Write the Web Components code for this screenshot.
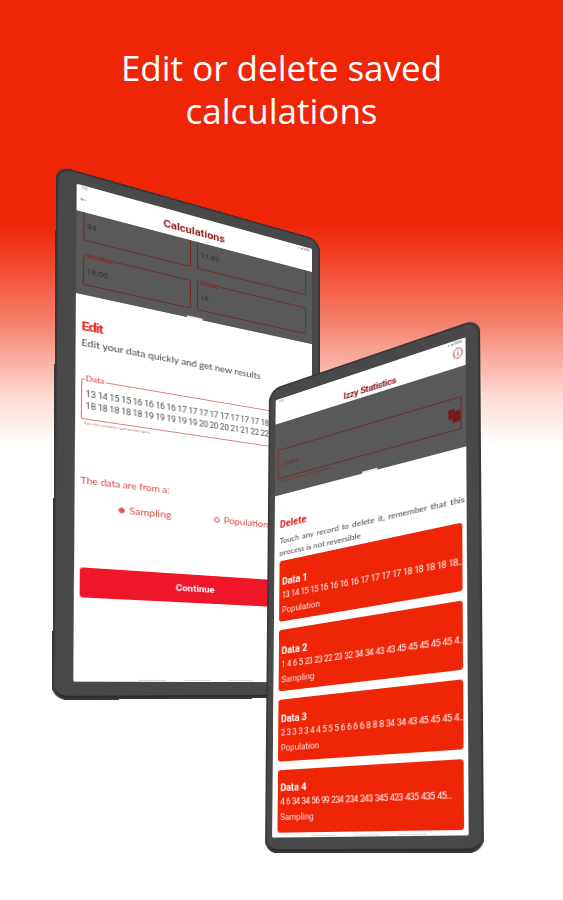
<!DOCTYPE html>
<html><head><meta charset="utf-8">
<style>
html,body{margin:0;padding:0}
body{width:563px;height:900px;overflow:hidden;font-family:"Open Sans","Liberation Sans",sans-serif}
</style></head>
<body>
<promo-shot>
  <span slot="title">Edit or delete saved<br>calculations</span>
  <tablet-frame w="264" h="531" pad="13 9 18 18" corners="56,165 320,240 320,698 52,700" slot="devices">
    <app-screen title="Calculations" time="9:25" back shift="-8" oh="84">
      <div slot="overlay" class="fields">
        <outline-field value="34" open></outline-field>
        <outline-field value="17.82" open></outline-field>
        <outline-field label="Median" value="18.00"></outline-field>
        <outline-field label="Mode" value="18"></outline-field>
      </div>
      <edit-sheet slot="sheet"></edit-sheet>
    </app-screen>
  </tablet-frame>
  <tablet-frame w="216" h="500" pad="14 13 16 8" corners="269,390 480,318 484,853 265,853" slot="devices">
    <app-screen title="Izzy Statistics" time="9:25" info shift="5" oh="79">
      <stats-overlay slot="overlay"></stats-overlay>
      <delete-sheet slot="sheet"></delete-sheet>
    </app-screen>
  </tablet-frame>
</promo-shot>
<script>
const shadow=(el,html)=>{el.attachShadow({mode:'open'}).innerHTML=html;};
const FONT='font-family:Lato,"Liberation Sans",sans-serif;';

function homography(w,h,p){
  const A=[],b=[];
  const src=[[0,0],[w,0],[w,h],[0,h]];
  for(let i=0;i<4;i++){
    const [x,y]=src[i],[u,v]=p[i];
    A.push([x,y,1,0,0,0,-u*x,-u*y]);b.push(u);
    A.push([0,0,0,x,y,1,-v*x,-v*y]);b.push(v);
  }
  for(let i=0;i<8;i++){
    let m=i;for(let r=i+1;r<8;r++)if(Math.abs(A[r][i])>Math.abs(A[m][i]))m=r;
    [A[i],A[m]]=[A[m],A[i]];[b[i],b[m]]=[b[m],b[i]];
    for(let r=0;r<8;r++){if(r===i)continue;const f=A[r][i]/A[i][i];
      for(let c=i;c<8;c++)A[r][c]-=f*A[i][c];b[r]-=f*b[i];}
  }
  const s=b.map((v,i)=>v/A[i][i]);
  return `matrix3d(${s[0]},${s[3]},0,${s[6]},${s[1]},${s[4]},0,${s[7]},0,0,1,0,${s[2]},${s[5]},0,1)`;
}

customElements.define('promo-shot',class extends HTMLElement{constructor(){super();shadow(this,`<style>
:host{display:block;position:relative;width:563px;height:900px;overflow:hidden;
background:linear-gradient(#ee2507 0,#ee2507 225px,#f13f25 255px,#f6836f 325px,#fdd9d2 395px,#fff 445px)}
h1{margin:0;padding-top:46px;text-align:center;color:#fff;font:400 35px/43px "Open Sans",sans-serif}
</style><h1><slot name="title"></slot></h1><slot name="devices"></slot>`);}});

customElements.define('tablet-frame',class extends HTMLElement{constructor(){super();
  const w=+this.getAttribute('w'),h=+this.getAttribute('h');
  const pts=this.getAttribute('corners').split(' ').map(s=>s.split(',').map(Number));
  const pad=this.getAttribute('pad').split(' ').join('px ')+'px';
  shadow(this,`<style>
:host{display:block;position:absolute;left:0;top:0;width:${w}px;height:${h}px;box-sizing:border-box;
transform-origin:0 0;transform:${homography(w,h,pts)};padding:${pad};background:#494949;border-radius:14px;
box-shadow:inset 0 0 0 2px #383838,inset 0 -4px 0 #2c2c2c}
.s{width:100%;height:100%;overflow:hidden;background:#fff;border-radius:2px;filter:blur(.35px)}
</style><div class="s"><slot></slot></div>`);}});

customElements.define('app-screen',class extends HTMLElement{constructor(){super();
  const t=this.getAttribute('title'),tm=this.getAttribute('time');
  const s=+this.getAttribute('shift'),oh=+this.getAttribute('oh');
  const info=this.hasAttribute('info');
  shadow(this,`<style>
:host{display:flex;flex-direction:column;height:100%;${FONT}position:relative}
header{flex:none;height:27px;background:#fff;position:relative;display:flex;align-items:flex-end;justify-content:center;box-sizing:border-box;padding-bottom:${info?2:4}px}
h2{margin:0 0 0 ${2*s}px;font-size:${info?9.5:11}px;letter-spacing:${info?-.4:0}px;font-weight:700;color:#8e1c1c;font-family:Roboto,sans-serif}
.st{position:absolute;left:4px;top:1px;font-size:3px;color:#777}
.sr{position:absolute;right:3px;top:1px;font-size:3px;color:#555}
.b{position:absolute;left:3px;bottom:10px;color:#b33;font-size:6px;line-height:7px}
svg{position:absolute;right:2px;bottom:8px}
.o{flex:none;background:#595959;height:${oh}px;overflow:hidden;box-sizing:border-box}
.m{flex:1;background:#fff;position:relative;min-height:0}
.h{position:absolute;left:50%;top:-2px;margin-left:${s-8}px;width:16px;height:2px;border-radius:2px;background:#e8e8e8}
.nav{position:absolute;left:0;right:0;bottom:1px;display:flex;justify-content:center;gap:18px;margin-left:${s}px}
.nav i{display:block;width:26px;height:1.4px;background:#d9d9d9}
</style>
<header><span class="st">${tm}</span><span class="sr">▾ ▮ 100%</span>
${this.hasAttribute('back')?'<span class="b">←</span>':''}
${info?'<svg width="10" height="12" viewBox="0 0 10 12"><ellipse cx="5" cy="6" rx="3.9" ry="5" fill="none" stroke="#9c2a2a" stroke-width=".8"/><path d="M5 3v1M5 5.2v3.6" stroke="#9c2a2a" stroke-width=".8"/></svg>':''}
<h2>${t}</h2></header>
<div class="o"><slot name="overlay"></slot></div>
<div class="m"><div class="h"></div><slot name="sheet"></slot><div class="nav"><i></i><i></i><i></i></div></div>`);}
  connectedCallback(){const f=this.querySelector('.fields');if(f){f.style.cssText='display:grid;grid-template-columns:101px 117px;grid-auto-rows:31px;gap:14px 6px;padding:0 6px;margin-top:-2px';}}
});

customElements.define('outline-field',class extends HTMLElement{constructor(){super();
  const l=this.getAttribute('label'),v=this.getAttribute('value');
  shadow(this,`<style>
:host{display:block;position:relative;box-sizing:border-box;border:.8px solid #702a2a;border-radius:1px;padding:11px 2px 0;font:7.8px Roboto,sans-serif;color:#2f2f2f}
:host([open]){border-top:none}
i{position:absolute;left:1px;top:-5px;background:#595959;padding:0 1px;font-style:normal;font-weight:500;color:#8b2424;font-size:7.6px}
</style>${l?`<i>${l}</i>`:''}${v}`);}});

customElements.define('edit-sheet',class extends HTMLElement{constructor(){super();
  shadow(this,`<style>
:host{display:flex;flex-direction:column;padding:24px 7px 0 5px;${FONT}color:#d8362a}
h3{margin:0;font:700 13px/16px Roboto,sans-serif;letter-spacing:-.9px;color:#e2261c}
p{margin:2px 0 0;font-size:9.6px;line-height:13px;color:#444;white-space:nowrap}
.d{height:41px;border:.8px solid #d88078;border-radius:1px;box-sizing:border-box;padding:9px 3px 0;font:8.4px/11.5px Roboto,sans-serif;letter-spacing:-.28px;color:#4a4a4a;white-space:nowrap;width:223px;overflow:hidden}
.l{position:absolute;left:3px;top:-5px;background:#fff;padding:0 1px;color:#d8362a;font-size:8px;line-height:9px;z-index:1}
.w{position:relative;flex:none;margin-top:30px}
small{display:block;font-size:3.6px;line-height:5px;color:#b77;margin-top:1px;padding-left:3px}
.q{margin-top:49px;font-size:9.3px;line-height:13px;color:#d8453a}
.r{display:flex;margin:13px 0 0 34px;gap:42px;font-size:10px;line-height:13px}
.go{margin-top:55px;height:30px;border-radius:3px;background:#f01629;color:#fff;font:700 9.5px/30px Roboto,sans-serif;text-align:center;flex:none;padding-right:10px}
</style>
<h3>Edit</h3><p>Edit your data quickly and get new results</p>
<div class="w"><span class="l">Data</span><div class="d">13 14 15 15 16 16 16 16 17 17 17 17 17 17 17 17 18<br>18 18 18 18 18 19 19 19 19 19 20 20 20 21 21 22 22</div></div>
<small>Enter the numbers separated by space</small>
<div class="q">The data are from a:</div>
<div class="r"><radio-option checked>Sampling</radio-option><radio-option>Population</radio-option></div>
<div class="go">Continue</div>`);}});

customElements.define('radio-option',class extends HTMLElement{constructor(){super();
  const c=this.hasAttribute('checked');
  shadow(this,`<style>:host{display:inline-flex;align-items:center;gap:4px;color:#d8453a}
b{width:6px;height:6px;border:.8px solid #d8453a;border-radius:50%;box-sizing:border-box;display:block;background:${c?'radial-gradient(#d8453a 55%,transparent 60%)':'none'}}
</style><b></b><slot></slot>`);}});

customElements.define('stats-overlay',class extends HTMLElement{constructor(){super();
  shadow(this,`<style>
:host{display:block;padding:29px 4px 0 3px;font-family:Roboto,sans-serif}
.a{position:relative;height:32px;border:.8px solid #702a2a;box-sizing:border-box;display:flex;justify-content:space-between;align-items:center;padding:0 0 0 6px;color:#7e2a2a;font-size:8px}
.c{font-size:3.4px;line-height:5px;margin-top:1px;color:#8a2a2a;padding-left:2px}
</style>
<div class="a"><span>Data</span><svg width="11" height="15" viewBox="0 0 11 15"><path d="M0 1.5h5.5v9.5H0z" fill="#7a1717"/><path d="M3.5 4h6l1.5 1.5V14.5H3.5z" fill="#7a1717" stroke="#4e4a4a" stroke-width=".6"/></svg></div>
<div class="c">Enter the numbers separated by space</div>`);}});

customElements.define('delete-sheet',class extends HTMLElement{constructor(){super();
  shadow(this,`<style>
:host{display:flex;flex-direction:column;padding:27px 4px 0 6px;${FONT}}
h3{margin:0;font:700 10.5px/12px Roboto,sans-serif;color:#dc2020}
p{margin:4.5px 0 2.5px;font-size:8.4px;line-height:13px;color:#444;white-space:nowrap}
p span{word-spacing:1.1px}
.l{display:flex;flex-direction:column;gap:9px}
</style>
<h3>Delete</h3><p><span>Touch any record to delete it, remember that this</span><br>process is not reversible</p>
<div class="l">
<record-card top="17" name="Data 1" data="13 14 15 15 16 16 16 16 17 17 17 17 18 18 18 18 18..." kind="Population"></record-card>
<record-card top="17" name="Data 2" data="1 4 6 5 23 23 22 23 32 34 34 43 43 45 45 45 45 45 4..." kind="Sampling"></record-card>
<record-card top="15" name="Data 3" data="2 3 3 3 3 4 4 5 5 5 6 6 6 6 8 8 8 34 34 43 45 45 45 4..." kind="Population"></record-card>
<record-card top="13" name="Data 4" data="4 6 34 34 56 99 234 234 243 345 423 435 435 45..." kind="Sampling"></record-card>
</div>`);}});

customElements.define('record-card',class extends HTMLElement{constructor(){super();
  shadow(this,`<style>
:host{display:flex;flex-direction:column;height:65px;box-sizing:border-box;padding:${this.getAttribute('top')}px 2px 0 3px;background:#ee2507;border-radius:3px;color:#fff;font-family:Roboto,sans-serif;white-space:nowrap;overflow:hidden}
b{font-size:10px;line-height:12px}
span{font-size:8.4px;line-height:12px;letter-spacing:-.6px;word-spacing:.9px;margin-top:2px}
em{font-style:normal;font-size:8.8px;line-height:14px;opacity:.85;margin-top:3px}
</style><b>${this.getAttribute('name')}</b><span>${this.getAttribute('data')}</span><em>${this.getAttribute('kind')}</em>`);}});
</script>
</body></html>
